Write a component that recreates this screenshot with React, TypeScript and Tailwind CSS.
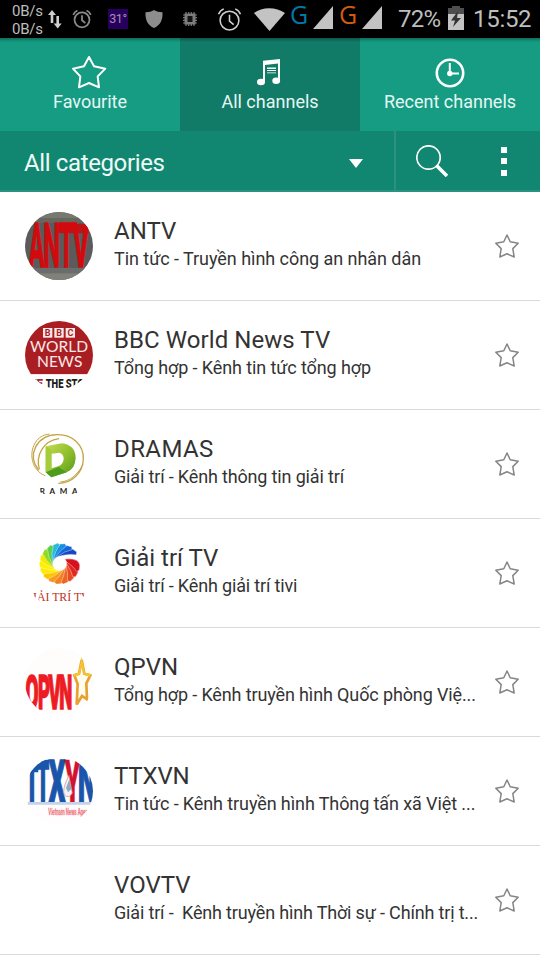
import React from 'react';

const STAR = '12,1 15.2,7.8 23.2,9.2 17.8,14.6 19.2,23 12,19.8 4.8,23 6.2,14.6 0.8,9.2 8.8,7.8';

function AlarmIcon({ className, width }: { className: string; width: number }) {
  return (
    <svg className={className} viewBox="0 0 24 24" fill="none" stroke="currentColor" strokeWidth={width}>
      <circle cx="12" cy="13" r="9" />
      <path d="M12 7.5v6l4 3.5M1.5 7a9 9 0 0 1 5-5.2M22.5 7a9 9 0 0 0-5-5.2" />
    </svg>
  );
}

function Signal() {
  return (
    <svg className="ml-[6px] mt-[6px] h-[23px] w-5 shrink-0" viewBox="0 0 20 23">
      <path d="M20 0v23H0z" fill="#c3c3c3" />
    </svg>
  );
}

function StatusBar() {
  return (
    <div className="flex h-[38px] items-start overflow-hidden bg-black text-[#bebebe]">
      <div className="ml-3 mt-[2px] w-8 whitespace-nowrap text-[15px] leading-[18px] tracking-[-0.25px]">
        <div>0B/s</div>
        <div>0B/s</div>
      </div>
      <svg className="ml-1 mt-[10px] h-[19px] w-[14px]" viewBox="0 0 14 19" fill="#cfcfcf">
        <path d="M4 0l4 5H5.300v8H2.700V5H0zM9.700 18.500l-4-5h2.700V6H11v7.500h2.700z" />
      </svg>
      <AlarmIcon className="ml-[10px] mt-[9px] h-5 w-5 text-[#8b8b8b]" width={2.1} />
      <div className="ml-4 mt-[9px] h-5 w-5 whitespace-nowrap bg-[#26005c] text-center text-[12.500px] leading-5 tracking-[-0.4px] text-[#a58fae]">31°</div>
      <svg className="ml-[17px] mt-[10px] h-[18px] w-[18px]" viewBox="0 0 18 18" fill="#8d8d8d">
        <path d="M9 0c2.500 1.500 5 2.200 8.500 2.200C18 10 15 15.500 9 18 3 15.500 0 10 .5 2.200 4 2.200 6.500 1.500 9 0z" />
      </svg>
      <svg className="ml-[20px] mt-[12px] h-[14px] w-[14px]" viewBox="0 0 14 14">
        <path d="M3 0v14M5.700 0v14M8.300 0v14M11 0v14M0 3h14M0 5.700h14M0 8.300h14M0 11h14" stroke="#777" strokeWidth="1.200" />
        <rect x="1.500" y="1.500" width="11" height="11" fill="#7c7c7c" />
        <path d="M4.500 4h5v6h-5z" fill="#151515" />
      </svg>
      <AlarmIcon className="ml-[20px] mt-[7px] h-[25px] w-[25px] text-[#d0d0d0]" width={1.5} />
      <svg className="ml-[12px] mt-[8px] h-[23px] w-[31px]" viewBox="0 0 31 23">
        <path d="M0 5C8-1.500 22-1.500 31 5L15.500 23z" fill="#c3c3c3" />
      </svg>
      <div className="ml-[5px] mr-px w-4 font-['Open_Sans','Noto_Sans',sans-serif] text-[25px] font-medium leading-[28px] text-[#0078aa]">G</div>
      <Signal />
      <div className="ml-[6px] mr-px w-4 font-['Open_Sans','Noto_Sans',sans-serif] text-[25px] font-medium leading-[28px] text-[#d45a0c]">G</div>
      <Signal />
      <div className="ml-[16px] mt-[5px] w-[44px] text-[24px] leading-[28px] tracking-[-0.8px]">72%</div>
      <svg className="ml-[6px] mt-[6px] h-6 w-4" viewBox="0 0 16 24">
        <path d="M4 0h8v2h4v7H0V2h4z" fill="#4f4f4f" />
        <path d="M0 8h16v16H0z" fill="#c3c3c3" />
        <path d="M10 5L3 14.500h4L5 21l8-9H9z" fill="#333" />
      </svg>
      <div className="ml-[9px] mt-[5px] whitespace-nowrap text-[24px] leading-[28px] tracking-[-0.3px]">15:52</div>
    </div>
  );
}

function Tab({ label, active, children }: { label: string; active?: boolean; children: React.ReactNode }) {
  return (
    <div className={`flex h-[93px] flex-1 flex-col items-center ${active ? 'bg-[#117b68]' : 'bg-[#159c83]'}`}>
      <div className="h-1 w-full bg-gradient-to-b from-black/30 to-transparent" />
      <div className="mt-[12px] flex h-9 items-center justify-center">{children}</div>
      <div className="mt-px whitespace-nowrap text-[18px] leading-[22px] text-[#e6f7f3]">{label}</div>
    </div>
  );
}

function Antv() {
  const letters: [string, number, number][] = [['A', 56, 47], ['N', 100, 50], ['T', 147, 44], ['V', 188, 49]];
  return (
    <svg viewBox="45 36 204 204" className="h-full w-full">
      <rect x="45" y="36" width="204" height="204" fill="#5b5b5b" />
      <path d="M45 36h204v18H45z" fill="#777970" />
      <path d="M45 54h204v14H45z" fill="#66685f" />
      <path d="M45 204h204v16H45z" fill="#6c6c6c" />
      <path d="M45 220h204v20H45z" fill="#80827a" />
      <path d="M145 72h91v28h-91z" fill="#b91617" />
      {letters.map(([c, x, w]) => (
        <text key={c} x={x} y="201" fontSize="182" fontWeight="700" fill="#d20a0e" stroke="#d20a0e" strokeWidth="4" textLength={w} lengthAdjust="spacingAndGlyphs">{c}</text>
      ))}
    </svg>
  );
}

function Bbc() {
  return (
    <svg viewBox="45 33 204 204" className="h-full w-full">
      <rect x="45" y="33" width="204" height="160" fill="#a91e22" />
      <rect x="45" y="193" width="204" height="44" fill="#fff" />
      {['B', 'B', 'C'].map((c, i) => (
        <g key={i}>
          <rect x={99 + i * 34} y="54" width="28" height="29" fill="#fbe9e9" />
          <text x={113 + i * 34} y="78" fontSize="27" fontWeight="700" textAnchor="middle" fill="#a91e22">{c}</text>
        </g>
      ))}
      <g fill="#fbe9e9" className="font-['Lato',sans-serif]">
        <text x="60" y="126" fontSize="46" textLength="174" lengthAdjust="spacingAndGlyphs">WORLD</text>
        <text x="81" y="171" fontSize="46" textLength="136" lengthAdjust="spacingAndGlyphs">NEWS</text>
      </g>
      <g fontSize="40" fontWeight="900">
        <text x="57" y="233" fill="#a92b2e" textLength="42" lengthAdjust="spacingAndGlyphs">VE</text>
        <text x="107" y="233" fill="#1c1c1c" textLength="133" lengthAdjust="spacingAndGlyphs">THE STOR</text>
      </g>
    </svg>
  );
}

function Dramas() {
  return (
    <svg viewBox="45 30 204 204" className="h-full w-full">
      <defs>
        <linearGradient id="leaf" x1="0" y1="0" x2="1" y2="1">
          <stop offset="0" stopColor="#c5dd50" />
          <stop offset=".55" stopColor="#8dbc2c" />
          <stop offset="1" stopColor="#4f9619" />
        </linearGradient>
      </defs>
      <g fill="none" stroke="#c5a447">
        <path d="M86 151C50 104 80 46 140 44C191 42 221 79 220 116C219 160 184 190 145 190" strokeWidth="4" />
        <path d="M106 167C65 153 53 96 80 62C91 48 104 44 119 42" strokeWidth="3" />
        <path d="M88 148C76 105 101 62 147 56" strokeWidth="4" />
        <path d="M151 186C181 184 205 162 219 132" strokeWidth="3" />
      </g>
      <path d="M107 79L155 70Q197 75 197 115Q195 148 170 157L124 172L107 155z" fill="url(#leaf)" />
      <path d="M107 79l18 12v58l-18 8z" fill="#a5cc3a" />
      <path d="M125 101l24-3q12 4 12 18-1 17-15 22l-21 7z" fill="#fff" />
      <path d="M124 150l22-9 24 16-46 15-17-15z" fill="#4f9c1d" />
      <text x="89" y="222" fontSize="24" fontWeight="700" fill="#222" letterSpacing="14" className="font-['Lato',sans-serif]">RAMA</text>
    </svg>
  );
}

const PETAL_COLORS = [
  '#1647c0', '#1464dc', '#1590e2', '#26bcd6', '#5ccc4a', '#8fdc1e', '#f6e800', '#fff000',
  '#ffea00', '#ffc400', '#f89a20', '#f47e22', '#ef6524', '#e84a22', '#e2261e', '#d61120',
];

// One feather of the swirl: a crescent that runs from the inner ring to the outer one.
function petalPath(i: number) {
  const at = (deg: number, r: number) => {
    const a = (deg * Math.PI) / 180;
    return `${(149 + r * Math.cos(a)).toFixed(1)} ${(101 + r * Math.sin(a)).toFixed(1)}`;
  };
  const outer = -28 - i * 20.5;
  const sweep = 96 - i * 2;
  return `M${at(outer - sweep, 21)}Q${at(outer - sweep * 0.6, 72)} ${at(outer - 6, 62)}L${at(outer, 56)}Q${at(outer - sweep * 0.2, 42)} ${at(outer - sweep + 28, 22)}z`;
}

function GiaiTri() {
  return (
    <svg viewBox="45 27 204 204" className="h-full w-full">
      {PETAL_COLORS.map((c, i) => (
        <path key={i} d={petalPath(i)} fill={c} stroke="#fff" strokeWidth="1.200" />
      ))}
      <text x="69" y="212" fontSize="39" fill="#bd321e" textLength="170" lengthAdjust="spacingAndGlyphs" className="font-['Liberation_Serif',serif]">IẢI TRÍ TV</text>
    </svg>
  );
}

function Qpvn() {
  const letters: [string, number, number][] = [['Q', 46, 40], ['P', 84, 36], ['V', 115, 38], ['N', 148, 39]];
  return (
    <svg viewBox="45 24 204 204" className="h-full w-full">
      <rect x="45" y="24" width="204" height="204" fill="#fffcfc" />
      {letters.map(([c, x, w]) => (
        <text key={c} x={x} y="208" fontSize="144" fontWeight="900" fill="#ed1b24" stroke="#ed1b24" strokeWidth="5" textLength={w} lengthAdjust="spacingAndGlyphs">{c}</text>
      ))}
      <path d="M215 60L223 101L241 106L229 130L231 178L216 168L200 194L203 132L193 106L207 101z" fill="#fffdf0" stroke="#e8a02e" strokeWidth="8" />
      <path d="M215 50l-10 48-16 4 4 8 16-5 6-23 7 23 18 5 4-8-19-4z" fill="#f6c430" />
    </svg>
  );
}

function Ttxvn() {
  return (
    <svg viewBox="45 36 204 204" className="h-full w-full">
      <rect x="45" y="36" width="204" height="204" fill="#fffdfd" />
      <g fontWeight="900" fill="#1955ab" stroke="#1955ab">
        <text x="48" y="169" fontSize="154" strokeWidth="8" textLength="36" lengthAdjust="spacingAndGlyphs">T</text>
        <text x="81" y="169" fontSize="168" strokeWidth="8" textLength="36" lengthAdjust="spacingAndGlyphs">T</text>
        <text x="116" y="171" fontSize="178" strokeWidth="5" textLength="50" lengthAdjust="spacingAndGlyphs">X</text>
        <text x="204" y="171" fontSize="178" strokeWidth="5" textLength="52" lengthAdjust="spacingAndGlyphs">N</text>
      </g>
      <text x="164" y="171" fontSize="178" fontWeight="900" fill="#d3122c" stroke="#d3122c" strokeWidth="2" textLength="46" lengthAdjust="spacingAndGlyphs">Y</text>
      <path d="M177 91q-22 43-14 59 14 12 24-6z" fill="#eff4f8" stroke="#e57a87" strokeWidth="2" />
      <path d="M178 103l-10 26 6 13 10-10z" fill="#91aabd" />
      <path d="M53 171h194v8H53z" fill="#c3d3e8" />
      <text x="115" y="209" fontSize="28" fontWeight="700" fill="#f0808a" stroke="#f0808a" textLength="132" lengthAdjust="spacingAndGlyphs">Vietnam News Agency</text>
    </svg>
  );
}

const CHANNELS = [
  { name: 'ANTV', info: 'Tin tức - Truyền hình công an nhân dân', Logo: Antv, nameStyle: '', infoStyle: 'tracking-[-0.05px]' },
  { name: 'BBC World News TV', info: 'Tổng hợp - Kênh tin tức tổng hợp', Logo: Bbc, nameStyle: 'tracking-[0.07px]', infoStyle: 'tracking-[-0.1px]' },
  { name: 'DRAMAS', info: 'Giải trí - Kênh thông tin giải trí', Logo: Dramas, nameStyle: 'tracking-[0.4px]', infoStyle: 'tracking-[-0.16px]' },
  { name: 'Giải trí TV', info: 'Giải trí - Kênh giải trí tivi', Logo: GiaiTri, nameStyle: '', infoStyle: 'tracking-[-0.16px]' },
  { name: 'QPVN', info: 'Tổng hợp - Kênh truyền hình Quốc phòng Việ...', Logo: Qpvn, nameStyle: '', infoStyle: 'tracking-[-0.13px]' },
  { name: 'TTXVN', info: 'Tin tức - Kênh truyền hình Thông tấn xã Việt ...', Logo: Ttxvn, nameStyle: 'tracking-[-0.2px]', infoStyle: 'tracking-[-0.1px]' },
  { name: 'VOVTV', info: 'Giải trí -  Kênh truyền hình Thời sự - Chính trị t...', Logo: null, nameStyle: '', infoStyle: 'tracking-[-0.17px]' },
];

export default function App() {
  return (
    <div className="h-[960px] w-[540px] overflow-hidden bg-white font-['Roboto','Noto_Sans',sans-serif]">
      <StatusBar />
      <div className="flex">
        <Tab label="Favourite">
          <svg className="mr-[2px] h-[34px] w-[36px]" viewBox="213 51 108 102" fill="none" stroke="#fff" strokeWidth="6" strokeLinejoin="round">
            <path d="M267 57L282 85L316 92L293 115L297 148L267 135L237 148L241 115L219 92L252 85z" />
          </svg>
        </Tab>
        <Tab label="All channels" active>
          <svg className="h-7 w-7" viewBox="0 0 28 28" fill="#fff">
            <path d="M7 2.800L24 1v21.500h-2V5.500L9 7v17H7z" />
            <ellipse cx="5" cy="24" rx="4" ry="3.300" />
            <ellipse cx="20.200" cy="22.800" rx="3.900" ry="3.300" />
            <path d="M11 9.500h9v1.400h-9zM11 12h9v1h-9zM11 14.500h9v.8h-9z" />
          </svg>
        </Tab>
        <Tab label="Recent channels">
          <svg className="mt-[1px] h-[30px] w-[30px]" viewBox="0 0 30 30" fill="none" stroke="#fff">
            <circle cx="15" cy="15" r="13.200" strokeWidth="2.600" />
            <path d="M14.800 5v10.500H24" strokeWidth="2" />
            <circle cx="14.800" cy="15.500" r="2.700" fill="#fff" stroke="none" />
          </svg>
        </Tab>
      </div>
      <div className="flex h-[61px] border-b-2 border-[#2b927f] bg-[#118771]">
        <div className="flex w-[396px] items-center border-r-2 border-[#2b927f] pl-6 pr-[31px]">
          <span className="mt-1 flex-1 text-[24px] leading-7 tracking-[-0.37px] text-[#edfaf7]">All categories</span>
          <svg className="mt-1.5 h-[9px] w-[14px]" viewBox="0 0 14 9"><path d="M0 0h14L7 9z" fill="#fff" /></svg>
        </div>
        <svg className="ml-5 mt-[14px] h-8 w-8" viewBox="0 0 32 32" fill="none" stroke="#fff">
          <circle cx="12.500" cy="12.500" r="11.700" strokeWidth="1.700" />
          <path d="M20.500 20.500L31 31" strokeWidth="3.500" />
        </svg>
        <div className="ml-[53px] mt-[16px] flex flex-col gap-[5px]">
          <span className="h-[6px] w-[6px] bg-white" />
          <span className="h-[6px] w-[6px] bg-white" />
          <span className="mt-px h-[6px] w-[6px] bg-white" />
        </div>
      </div>
      {CHANNELS.map(({ name, info, Logo, nameStyle, infoStyle }) => (
        <div key={name} className="flex h-[109px] border-b border-[#d9d9d9] pl-[25px]">
          <div className="mt-5 h-[68px] w-[68px] shrink-0 overflow-hidden rounded-full">{Logo && <Logo />}</div>
          <div className="ml-[21px] mt-6 w-[381px] shrink-0 whitespace-pre text-[#333]">
            <div className={`text-[24px] leading-[30px] ${nameStyle}`}>{name}</div>
            <div className={`mt-px text-[18px] leading-6 ${infoStyle}`}>{info}</div>
          </div>
          <svg className="mt-[42px] h-6 w-6 shrink-0" viewBox="0 0 24 24" fill="none" stroke="#858585" strokeWidth="1.500" strokeLinejoin="round">
            <polygon points={STAR} />
          </svg>
        </div>
      ))}
    </div>
  );
}
